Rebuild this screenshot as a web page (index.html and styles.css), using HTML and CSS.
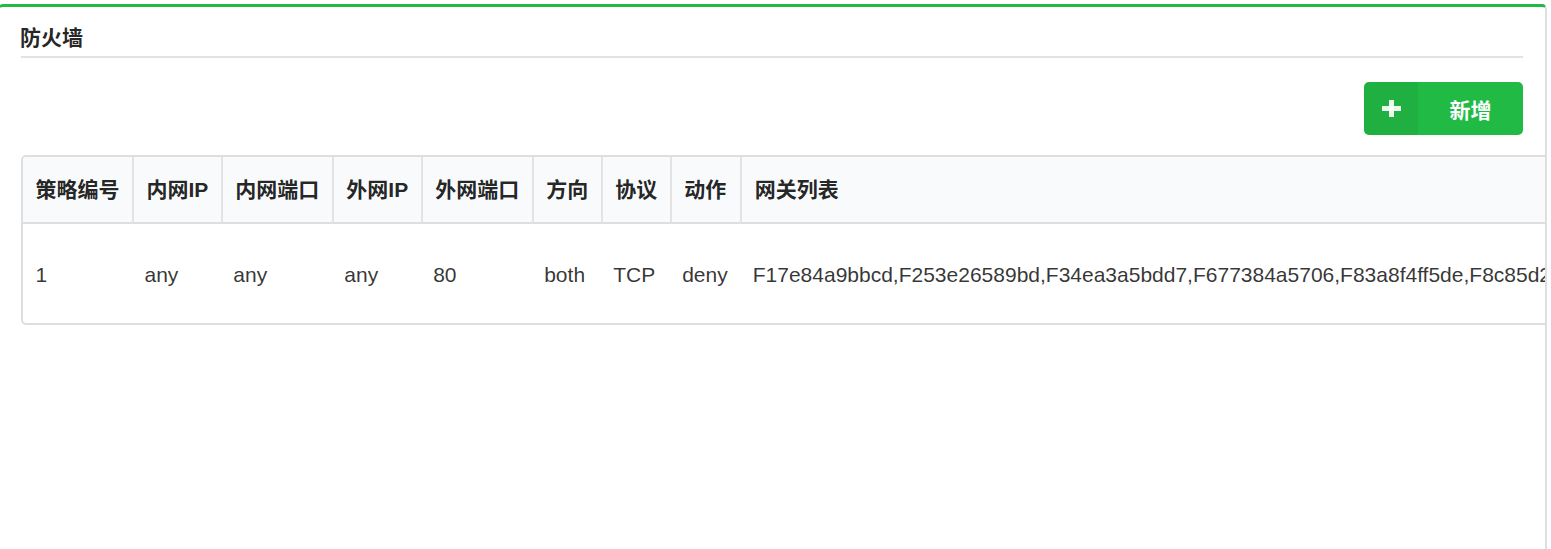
FILE: index.html
```html
<!DOCTYPE html>
<html lang="zh-CN">
<head>
<meta charset="utf-8">
<title>防火墙</title>
<link rel="stylesheet" href="styles.css">
</head>
<body>
<div class="card">
  <h2 class="title">防火墙</h2>
  <div class="toolbar">
    <button class="btn-add" type="button">
      <span class="btn-icon">
        <svg width="19" height="17" viewBox="0 0 19 17"><rect x="0" y="6" width="19" height="5" fill="currentColor"/><rect x="7" y="0" width="5" height="17" fill="currentColor"/></svg>
      </span>
      <span class="btn-text">新增</span>
    </button>
  </div>
  <div class="table-wrap">
    <table class="rules">
      <thead>
        <tr>
          <th>策略编号</th>
          <th>内网IP</th>
          <th>内网端口</th>
          <th>外网IP</th>
          <th>外网端口</th>
          <th>方向</th>
          <th>协议</th>
          <th>动作</th>
          <th class="wide">网关列表</th>
        </tr>
      </thead>
      <tbody>
        <tr>
          <td>1</td>
          <td>any</td>
          <td>any</td>
          <td>any</td>
          <td>80</td>
          <td>both</td>
          <td>TCP</td>
          <td>deny</td>
          <td>F17e84a9bbcd,F253e26589bd,F34ea3a5bdd7,F677384a5706,F83a8f4ff5de,F8c85d2a91f3,F9b04c7e2d18</td>
        </tr>
      </tbody>
    </table>
  </div>
</div>
</body>
</html>
```

FILE: styles.css
```css
html, body {
  margin: 0;
  padding: 0;
  background: #ffffff;
}

body {
  font-family: "Liberation Sans", "Noto Sans CJK SC", sans-serif;
  font-size: 21px;
  color: rgba(0, 0, 0, 0.87);
}

.card {
  margin: 4px 4px 0 -2px;
  min-height: 600px;
  border: 2px solid #dedede;
  border-top: 3px solid #21ba45;
  border-radius: 5px;
  padding: 0 22px 40px 21px;
  overflow: hidden;
  box-sizing: border-box;
}

.title {
  margin: 0;
  padding: 17px 0 5px 0;
  font-size: 21px;
  line-height: 27px;
  font-weight: 700;
  text-indent: -1px;
  color: rgba(0, 0, 0, 0.87);
  border-bottom: 2px solid #e2e2e2;
}

.toolbar {
  display: flex;
  justify-content: flex-end;
  margin-top: 24px;
}

.btn-add {
  display: flex;
  align-items: stretch;
  width: 159px;
  height: 53px;
  padding: 0;
  border: none;
  border-radius: 5px;
  background: #21ba45;
  color: #ffffff;
  font-family: inherit;
  font-size: 21px;
  font-weight: 700;
  overflow: hidden;
  cursor: pointer;
}

.btn-icon {
  display: flex;
  align-items: center;
  justify-content: center;
  width: 54px;
  background: rgba(0, 0, 0, 0.05);
  color: rgba(255, 255, 255, 0.9);
}

.btn-text {
  flex: 1;
  display: flex;
  align-items: center;
  justify-content: center;
}

.table-wrap {
  margin-top: 20px;
  width: max-content;
  border: 2px solid #dedede;
  border-radius: 5px;
  overflow: hidden;
}

.rules {
  border-collapse: separate;
  border-spacing: 0;
  white-space: nowrap;
}

.rules th {
  background: #f9fafb;
  text-align: left;
  font-size: 21px;
  font-weight: 700;
  padding: 17px 12.5px;
  line-height: 31px;
  border-bottom: 2px solid #dedede;
  color: rgba(0, 0, 0, 0.87);
}

.rules th + th {
  border-left: 2px solid #e3e3e3;
}

.rules td {
  padding: 35px 12.5px 33px 12.5px;
  font-size: 21px;
  line-height: 31px;
  color: rgba(0, 0, 0, 0.8);
}

.rules .wide {
  min-width: 60px;
}
```
